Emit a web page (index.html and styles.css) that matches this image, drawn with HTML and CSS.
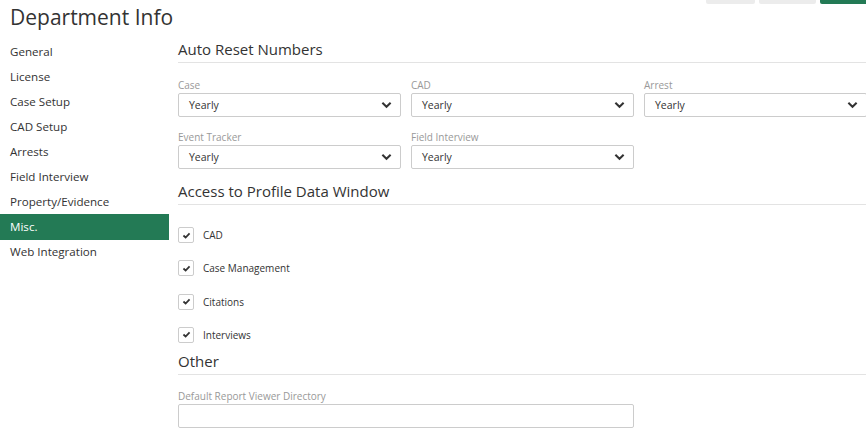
FILE: index.html
```html
<!DOCTYPE html>
<html>
<head>
<meta charset="utf-8">
<link rel="stylesheet" href="styles.css">
</head>
<body>
<div class="page">
  <header class="header">
    <h1 class="title">Department Info</h1>
    <div class="toolbar">
      <button class="btn btn-gray btn-a"></button>
      <button class="btn btn-gray btn-b"></button>
      <button class="btn btn-green"></button>
    </div>
  </header>
  <div class="layout">
    <nav class="sidebar">
      <a class="nav-item">General</a>
      <a class="nav-item">License</a>
      <a class="nav-item">Case Setup</a>
      <a class="nav-item">CAD Setup</a>
      <a class="nav-item">Arrests</a>
      <a class="nav-item">Field Interview</a>
      <a class="nav-item">Property/Evidence</a>
      <a class="nav-item active">Misc.</a>
      <a class="nav-item">Web Integration</a>
    </nav>
    <main class="content">
      <h2 class="section-title">Auto Reset Numbers</h2>
      <div class="grid">
        <div class="field">
          <label class="label">Case</label>
          <div class="select"><span>Yearly</span><svg class="chev" viewBox="0 0 12 8"><path d="M1.5 1.5 L6 6 L10.5 1.5" fill="none" stroke="#333" stroke-width="2.2"/></svg></div>
        </div>
        <div class="field">
          <label class="label">CAD</label>
          <div class="select"><span>Yearly</span><svg class="chev" viewBox="0 0 12 8"><path d="M1.5 1.5 L6 6 L10.5 1.5" fill="none" stroke="#333" stroke-width="2.2"/></svg></div>
        </div>
        <div class="field">
          <label class="label">Arrest</label>
          <div class="select"><span>Yearly</span><svg class="chev" viewBox="0 0 12 8"><path d="M1.5 1.5 L6 6 L10.5 1.5" fill="none" stroke="#333" stroke-width="2.2"/></svg></div>
        </div>
        <div class="field">
          <label class="label">Event Tracker</label>
          <div class="select"><span>Yearly</span><svg class="chev" viewBox="0 0 12 8"><path d="M1.5 1.5 L6 6 L10.5 1.5" fill="none" stroke="#333" stroke-width="2.2"/></svg></div>
        </div>
        <div class="field">
          <label class="label">Field Interview</label>
          <div class="select"><span>Yearly</span><svg class="chev" viewBox="0 0 12 8"><path d="M1.5 1.5 L6 6 L10.5 1.5" fill="none" stroke="#333" stroke-width="2.2"/></svg></div>
        </div>
      </div>

      <h2 class="section-title section-gap">Access to Profile Data Window</h2>
      <div class="checks">
        <div class="check"><span class="box"><svg viewBox="0 0 10 8"><path d="M1.5 4 L4 6.3 L8.5 1.5" fill="none" stroke="#333" stroke-width="2"/></svg></span><span class="check-label">CAD</span></div>
        <div class="check"><span class="box"><svg viewBox="0 0 10 8"><path d="M1.5 4 L4 6.3 L8.5 1.5" fill="none" stroke="#333" stroke-width="2"/></svg></span><span class="check-label">Case Management</span></div>
        <div class="check"><span class="box"><svg viewBox="0 0 10 8"><path d="M1.5 4 L4 6.3 L8.5 1.5" fill="none" stroke="#333" stroke-width="2"/></svg></span><span class="check-label">Citations</span></div>
        <div class="check"><span class="box"><svg viewBox="0 0 10 8"><path d="M1.5 4 L4 6.3 L8.5 1.5" fill="none" stroke="#333" stroke-width="2"/></svg></span><span class="check-label">Interviews</span></div>
      </div>

      <h2 class="section-title section-gap-sm">Other</h2>
      <div class="field wide">
        <label class="label">Default Report Viewer Directory</label>
        <div class="input"></div>
      </div>
    </main>
  </div>
</div>
</body>
</html>
```

FILE: styles.css
```css
* { box-sizing: border-box; }
html, body { margin: 0; padding: 0; background: #fff; overflow: hidden; }
body {
  font-family: "Open Sans", "Noto Sans", "Liberation Sans", sans-serif;
  color: #333;
  width: 866px;
  height: 436px;
}
.page { width: 866px; overflow: hidden; }
.header {
  display: flex;
  justify-content: space-between;
  align-items: flex-start;
  height: 39px;
}
.title {
  margin: 0;
  padding: 2px 0 0 10px;
  font-size: 21px;
  font-weight: 400;
  line-height: 30px;
  color: #333;
}
.toolbar {
  display: flex;
  gap: 4px;
  margin-top: -26px;
  margin-right: -4px;
}
.btn {
  border: none;
  height: 30px;
  border-radius: 2px;
  padding: 0;
}
.btn-gray { background: #ececec; }
.btn-a { width: 49px; }
.btn-b { width: 57px; }
.btn-green { background: #237a55; width: 50px; }

.layout { display: flex; }
.sidebar {
  width: 169px;
  flex: none;
  display: flex;
  flex-direction: column;
}
.nav-item {
  display: block;
  height: 25px;
  line-height: 25px;
  padding-left: 10px;
  font-size: 11.6px;
  color: #333;
}
.nav-item.active {
  background: #237a55;
  color: #fff;
  height: 26px;
  line-height: 26px;
  margin-bottom: -1px;
}
.content {
  flex: none;
  width: 700px;
  padding-left: 9px;
}
.section-title {
  margin: 0;
  font-size: 15px;
  font-weight: 400;
  line-height: 21px;
  color: #333;
  border-bottom: 1px solid #e3e3e3;
  padding-bottom: 2px;
  margin-right: -10px;
}
.section-gap { margin-top: 12px; }
.section-gap-sm { margin-top: 6px; }
.grid {
  display: grid;
  grid-template-columns: 223px 223px 223px;
  column-gap: 10px;
  row-gap: 12px;
  margin-top: 14px;
}
.field { display: flex; flex-direction: column; }
.field.wide { width: 456px; margin-top: 13px; }
.label {
  font-size: 10px;
  color: #999;
  line-height: 17px;
  height: 16px;
}
.select {
  height: 24px;
  border: 1px solid #ccc;
  border-radius: 2px;
  display: flex;
  align-items: center;
  justify-content: space-between;
  padding: 0 8px 0 10px;
  font-size: 10.5px;
  color: #333;
}
.chev { width: 11px; height: 8px; }
.input {
  height: 24px;
  border: 1px solid #ccc;
  border-radius: 2px;
}
.checks {
  display: flex;
  flex-direction: column;
  gap: 17.33px;
  padding-top: 22px;
  padding-bottom: 2px;
}
.check {
  display: flex;
  align-items: center;
  height: 16px;
}
.box {
  width: 16px;
  height: 16px;
  border: 1px solid #ccc;
  border-radius: 2px;
  display: flex;
  align-items: center;
  justify-content: center;
}
.box svg { width: 9px; height: 7px; }
.check-label {
  margin-left: 9px;
  font-size: 10px;
  color: #333;
}
```
